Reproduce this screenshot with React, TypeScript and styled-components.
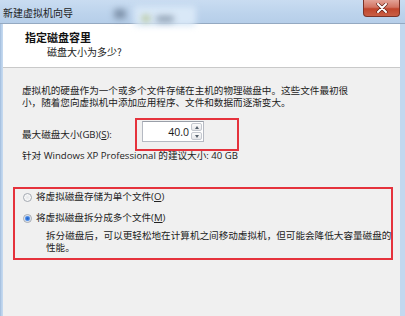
import React from "react";
import styled, { createGlobalStyle } from "styled-components";

const GlobalStyle = createGlobalStyle`
  html, body {
    margin: 0;
    padding: 0;
    background: #bcd3ec;
  }
  * {
    box-sizing: border-box;
  }
`;

const Window = styled.div`
  width: 405px;
  height: 316px;
  display: flex;
  flex-direction: column;
  background: linear-gradient(90deg, #9fbbdc 0px, #c3d8ef 2px, #c3d8ef 100%);
  font-family: "Open Sans", "Noto Sans CJK SC", sans-serif;
  color: #222;
  overflow: hidden;
`;

const TitleBar = styled.div`
  position: relative;
  height: 24px;
  display: flex;
  align-items: flex-start;
  background: linear-gradient(180deg, #c9dcf1 0%, #bcd3ec 60%, #b6cee9 100%);
  border-bottom: 1px solid #94a9c1;
`;

const TitleText = styled.div`
  font-family: "Noto Sans CJK SC", sans-serif;
  font-size: 10px;
  line-height: 14px;
  margin: 6px 0 0 3px;
  color: #1c1c1c;
  position: relative;
  z-index: 1;
`;

const Blur = styled.span<{ $l: number; $t: number; $w: number; $h: number; $c: string }>`
  position: absolute;
  left: ${(p) => p.$l}px;
  top: ${(p) => p.$t}px;
  width: ${(p) => p.$w}px;
  height: ${(p) => p.$h}px;
  background: ${(p) => p.$c};
  filter: blur(3px);
  border-radius: 3px;
`;

const CloseButton = styled.div`
  position: relative;
  z-index: 1;
  margin-left: auto;
  margin-right: 5px;
  width: 37px;
  height: 17px;
  border: 1px solid #7b3328;
  border-top: none;
  border-radius: 0 0 4px 4px;
  background: linear-gradient(180deg, #e3a397 0%, #d27462 45%, #c0452c 55%, #c95f45 100%);
  display: flex;
  align-items: center;
  justify-content: center;
`;

const Client = styled.div`
  flex: 1;
  margin: 0 5px 0 3px;
  display: flex;
  flex-direction: column;
  background: #f0f0f0;
`;

const Header = styled.div`
  height: 44px;
  background: #fff;
  border-bottom: 1px solid #c9c9c9;
  padding: 6px 0 0 22px;
  font-family: "Noto Sans CJK SC", sans-serif;
`;

const HeaderTitle = styled.div`
  font-size: 11px;
  line-height: 14px;
  font-weight: 700;
  color: #111;
`;

const HeaderSubtitle = styled.div`
  font-size: 10px;
  line-height: 14px;
  margin: 1px 0 0 22px;
  color: #222;
`;

const Body = styled.div`
  padding: 17px 0 0 19px;
  font-size: 9.6px;
  display: flex;
  flex-direction: column;
`;

const Paragraph = styled.div`
  line-height: 11.5px;
  width: 340px;
`;

const SizeRow = styled.div`
  display: flex;
  align-items: flex-start;
  margin-top: 13px;
  height: 21px;
`;

const FieldLabel = styled.div`
  width: 120px;
  line-height: 14px;
  margin-top: 7px;
`;

const Key = styled.span`
  text-decoration: underline;
`;

const SpinHolder = styled.div`
  position: relative;
`;

const Highlight = styled.div<{ $l: number; $t: number; $w: number; $h: number }>`
  position: absolute;
  left: ${(p) => p.$l}px;
  top: ${(p) => p.$t}px;
  width: ${(p) => p.$w}px;
  height: ${(p) => p.$h}px;
  border: 2px solid #e5323c;
  pointer-events: none;
`;

const SpinBox = styled.div`
  width: 62px;
  height: 21px;
  background: #fff;
  border: 1px solid #b5b9c2;
  border-top-color: #9a9fa8;
  display: flex;
  align-items: center;
  padding: 1px;
`;

const SpinValue = styled.div`
  flex: 1;
  text-align: right;
  font-size: 10.5px;
  padding-right: 2px;
  color: #1a1a1a;
`;

const SpinButtons = styled.div`
  width: 11px;
  height: 17px;
  display: flex;
  flex-direction: column;
  gap: 1px;
`;

const SpinButton = styled.div`
  flex: 1;
  border: 1px solid #c4c8cf;
  border-radius: 2px;
  background: linear-gradient(180deg, #fbfbfb, #e6e7ea);
  display: flex;
  align-items: center;
  justify-content: center;
`;

const Arrow = styled.span<{ $down?: boolean }>`
  width: 0;
  height: 0;
  border-left: 2.5px solid transparent;
  border-right: 2.5px solid transparent;
  ${(p) => (p.$down ? "border-top: 3px solid #55606c;" : "border-bottom: 3px solid #55606c;")}
`;

const Hint = styled.div`
  line-height: 14px;
  margin-top: 7px;
  white-space: nowrap;
`;

const OptionBox = styled.div`
  margin: 24px 0 0 -9px;
  width: 380px;
  height: 73px;
  border: 2px solid #e5323c;
  padding: 1px 0 0 8px;
  display: flex;
  flex-direction: column;
`;

const OptionRow = styled.label<{ $gap?: number }>`
  display: flex;
  align-items: center;
  gap: 4px;
  line-height: 14px;
  margin-top: ${(p) => p.$gap ?? 0}px;
`;

const Radio = styled.span<{ $on?: boolean }>`
  width: 9px;
  height: 9px;
  border-radius: 50%;
  border: 1px solid #a3a9b1;
  background: ${(p) =>
    p.$on
      ? "radial-gradient(circle, #1f5fc9 0, #3a7fe0 1.6px, #8fb6ee 2.6px, #f4f4f4 3.2px)"
      : "radial-gradient(circle, #e4e6e9 0, #f7f7f7 3px)"};
  flex: none;
`;

const OptionText = styled.span`
  white-space: nowrap;
`;

const OptionNote = styled.div`
  margin: 5px 0 0 23px;
  line-height: 11.5px;
  width: 348px;
`;

export default function App() {
  return (
    <>
      <GlobalStyle />
      <Window>
        <TitleBar>
          <Blur $l={114} $t={9} $w={12} $h={10} $c="#7f93ab" />
          <Blur $l={134} $t={6} $w={62} $h={20} $c="#d9e8f7" />
          <Blur $l={142} $t={15} $w={8} $h={7} $c="#b7c79a" />
          <Blur $l={156} $t={16} $w={18} $h={6} $c="#8c9db0" />
          <TitleText>新建虚拟机向导</TitleText>
          <CloseButton>
            <svg width="12" height="10" viewBox="0 0 12 10">
              <path d="M2 1 L10 9 M10 1 L2 9" stroke="#5a1d14" strokeWidth="3.2" strokeLinecap="round" />
              <path d="M2 1 L10 9 M10 1 L2 9" stroke="#fff" strokeWidth="2" strokeLinecap="round" />
            </svg>
          </CloseButton>
        </TitleBar>
        <Client>
          <Header>
            <HeaderTitle>指定磁盘容里</HeaderTitle>
            <HeaderSubtitle>磁盘大小为多少?</HeaderSubtitle>
          </Header>
          <Body>
            <Paragraph>
              虚拟机的硬盘作为一个或多个文件存储在主机的物理磁盘中。这些文件最初很小，随着您向虚拟机中添加应用程序、文件和数据而逐渐变大。
            </Paragraph>
            <SizeRow>
              <FieldLabel>
                最大磁盘大小(GB)(<Key>S</Key>):
              </FieldLabel>
              <SpinHolder>
                <SpinBox>
                  <SpinValue>40.0</SpinValue>
                  <SpinButtons>
                    <SpinButton>
                      <Arrow />
                    </SpinButton>
                    <SpinButton>
                      <Arrow $down />
                    </SpinButton>
                  </SpinButtons>
                </SpinBox>
                <Highlight $l={-7} $t={-3} $w={104} $h={33} />
              </SpinHolder>
            </SizeRow>
            <Hint>针对 Windows XP Professional 的建议大小: 40 GB</Hint>
            <OptionBox>
              <OptionRow>
                <Radio />
                <OptionText>
                  将虚拟磁盘存储为单个文件(<Key>O</Key>)
                </OptionText>
              </OptionRow>
              <OptionRow $gap={7}>
                <Radio $on />
                <OptionText>
                  将虚拟磁盘拆分成多个文件(<Key>M</Key>)
                </OptionText>
              </OptionRow>
              <OptionNote>
                拆分磁盘后，可以更轻松地在计算机之间移动虚拟机，但可能会降低大容量磁盘的性能。
              </OptionNote>
            </OptionBox>
          </Body>
        </Client>
      </Window>
    </>
  );
}
